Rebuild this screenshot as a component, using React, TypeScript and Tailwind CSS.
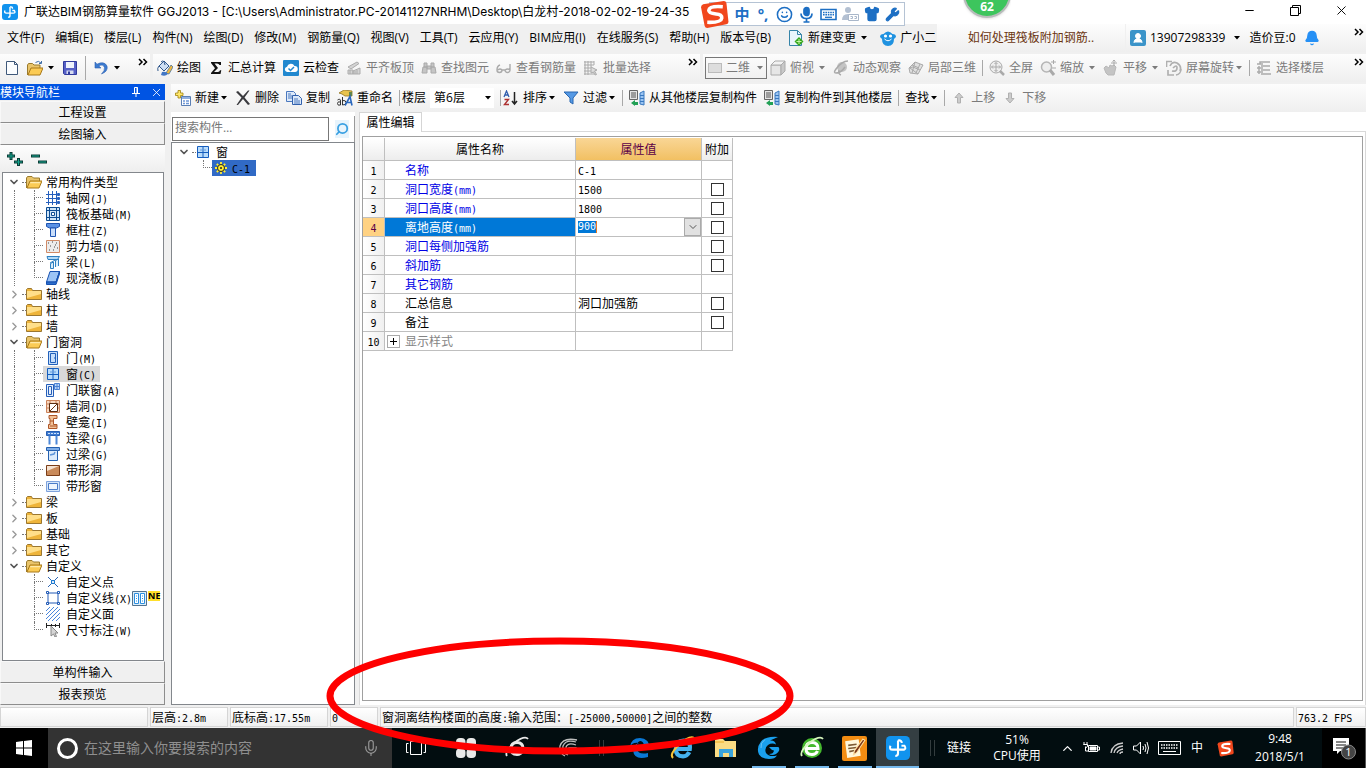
import React from "react";
import {
  ChevronDown, ChevronRight, ChevronUp, X, Minus, Search, Mic, Smile, Shirt, Wrench, Bell, UserRound,
} from "lucide-react";

const UI = "font-['Open_Sans','Noto_Sans_CJK_SC',sans-serif]";
const SONG = "font-['Noto_Sans_CJK_SC',sans-serif]";

/* Full-width characters stay at 12px; half-width ones take a 6px monospace cell. */
function Song({ text }: { text: string }) {
  return (
    <span className={`${SONG} whitespace-pre text-[12px] leading-4`}>
      {text.split(/([\x20-\x7e]+)/).filter(Boolean).map((part, i) =>
        /^[\x20-\x7e]/.test(part) ? (
          <span key={i} className="font-['DejaVu_Sans_Mono',monospace] text-[10px] leading-[10px]">{part}</span>
        ) : (
          <React.Fragment key={i}>{part}</React.Fragment>
        ),
      )}
    </span>
  );
}

const icons: Record<string, React.ReactNode> = {
  app: (
    <>
      <rect width="16" height="16" rx="3" fill="#1193ee" />
      <path d="M8 3v8.500q0 1.800-1.800 1.800M3 6.500q-1.200 2.600 1.500 2.600h8M10.300 6.500h2q1.800 2.600-1.200 2.600M8 3q2.500-.5 2.500 1.700" stroke="#fff" strokeWidth="1.400" fill="none" />
    </>
  ),
  doc: (
    <>
      <path d="M2.500 1.500h8l3 3v10h-11z" fill="#fbfdff" stroke="#3f587a" />
      <path d="M10.500 1.500v3h3" fill="none" stroke="#3f587a" />
    </>
  ),
  folderOpen: (
    <>
      <path d="M.500 14V4l1-1.500h4.500L7.500 4h6v3" fill="#e9c46a" stroke="#9a7a2c" />
      <path d="m1 14 3-7h12l-3 7z" fill="#fbcb55" stroke="#a87918" />
      <path d="m4.500 8h10l-.5 1.200H4z" fill="#ffe9a8" />
    </>
  ),
  openArrow: (
    <>
      <path d="M.500 15V5l1-1.500h4L7 5h6v3" fill="#e9c46a" stroke="#9a7a2c" />
      <path d="m1 15 3-7h12l-3 7z" fill="#fbcb55" stroke="#a87918" />
      <path d="M8.500 2.500q3-2.500 5.500.500m.500-2v2.500H12" stroke="#3f6ea8" fill="none" />
    </>
  ),
  save: (
    <>
      <path d="M1.500 1.500h13v13h-12l-1-1z" fill="#5660c6" stroke="#303a9c" />
      <path d="M4 2h8v6H4z" fill="#eef2fb" />
      <path d="M4.500 10.500h7V14h-7z" fill="#d6dcf0" />
      <path d="M6 11.500h2V14H6z" fill="#303a9c" />
    </>
  ),
  undo: <path d="M2 2v6h6L5.800 6Q10 3.500 11.500 7.500 12 10.500 8.500 14q7-3 5.500-8Q11 .500 4 4.200z" fill="#3c7bd0" stroke="#2b5fb0" strokeWidth=".6" />,
  draw: (
    <>
      <path d="M2 6 7 1l5 5-5 5z" fill="#cfe0f4" stroke="#31588c" />
      <path d="M4 2q3-3 4 3M2 6q-2 2-1 5" stroke="#31588c" fill="none" />
      <path d="m9 13 5-8 2 2-4 7z" fill="#efb840" stroke="#35669b" strokeWidth=".7" />
      <path d="M5 12q4-1 6 2-3 3-7 1z" fill="#4277c5" />
    </>
  ),
  sigma: <path d="M3 2h10v3h-1.500Q11 3.500 9 3.500H6.500L10 8l-4 4h4q1.500 0 2-1.800h1.300L12.500 14H3v-1l4-4.800L3 3z" fill="#111" />,
  cloud: (
    <>
      <rect width="16" height="16" rx="1" fill="#2188cf" />
      <path d="M4 12a2.700 2.700 0 0 1 0-5.300A4 4 0 0 1 11.500 6a3 3 0 0 1 .5 6z" fill="#fff" />
      <path d="m5.500 8.500 2 2L11 7" stroke="#2188cf" strokeWidth="1.500" fill="none" />
    </>
  ),
  slab: <path d="m2 7 9-5 2 1.500L5 9zM2 10h5v4H2zM7 11l7-3v6H7zM4 10v4M9 11v3M11 10v4" fill="#d4d4d4" stroke="#acacac" />,
  binoc: <path d="M2 7h4v6H1zM10 7h4l1 6h-5zM3 3h3v4H3zM10 3h3v4h-3zM6 6h4v3H6z" fill="#c5c5c5" stroke="#aaa" />,
  glasses: <path d="M4 5Q1 6 1 10a2.500 2.500 0 1 0 5 0q-2-2-4 0M6 10h3a2.500 2.500 0 1 0 5 0V4M14 10q-2-2-5 0" fill="none" stroke="#aaa" strokeWidth="1.400" />,
  batch: <path d="M1 2h10M1 5h10M1 8h7M1 11h7M1 14h10M2 1v14M5 1v14M8 1v6M11 1v4M8 7l6 3-2.500 1 2 3.500-1.500.500-1.500-3L8 13z" fill="#ddd" stroke="#aaa" />,
  cube: (
    <>
      <path d="M1 5h10v10H1z" fill="#e6e6e6" stroke="#aaa" />
      <path d="m1 5 4-4h10l-4 4z" fill="#f2f2f2" stroke="#aaa" />
      <path d="M15 1v10l-4 4V5z" fill="#c8c8c8" stroke="#aaa" />
    </>
  ),
  orbit: (
    <>
      <circle cx="9" cy="7" r="5" fill="#c4c4c4" />
      <path d="M15 1q-6 0-12 8-3 4 0 4 5 0 9-6M8 15q-3-1-2-5" fill="none" stroke="#aaa" strokeWidth="1.500" />
    </>
  ),
  local: <path d="m1 8 6-6 8 3-5 9-8-1zM4 5l7 3M2 8l8 6M7 2l-3 11M12 4l-4 9M1 8l4-1 7 3" fill="#e0e0e0" stroke="#aaa" />,
  fit: (
    <>
      <circle cx="7" cy="7" r="6" fill="#eee" stroke="#aaa" />
      <path d="M7 2.500v9M2.500 7h9M5.500 4 7 2.500 8.500 4M5.500 10 7 11.500 8.500 10M4 5.500 2.500 7 4 8.500M10 5.500 11.500 7 10 8.500" fill="none" stroke="#aaa" />
      <path d="m11 11 4 4" stroke="#aaa" strokeWidth="2.500" />
    </>
  ),
  zoom: (
    <>
      <circle cx="6.500" cy="7" r="5" fill="#eee" stroke="#b5b5b5" strokeWidth="1.500" />
      <path d="m10 10 4 5" stroke="#aaa" strokeWidth="3" />
      <path d="M11 2h5M13.500 0v4M12 8h4" stroke="#aaa" />
    </>
  ),
  hand: (
    <>
      <path d="m1 8 2-2 3 2 1-3 2 1 2-1 2 2-1 4-1 4H5l-2-2z" fill="#c4c4c4" stroke="#b8b8b8" />
      <path d="M11 0v6M8 3h6M9.500 1.500 11 0l1.500 1.500" fill="none" stroke="#aaa" />
    </>
  ),
  rotate: <path d="M.500 7V1.500H6M2 10v5h6M15 9a6 6 0 0 1-5 6M4 6q2-5 7-3 5 3 3 8M7 8q4-4 4 0t-5 3" fill="none" stroke="#b0b0b0" strokeWidth="1.700" />,
  floors: <path d="M1 4h6M4 4V2h10M5 6h9M1 8h6M5 10h9M1 12h6M5 14h10M3 6v8" fill="none" stroke="#aaa" strokeWidth="1.500" />,
  add: (
    <>
      <path d="M6.500 6.500h9v9h-9z" fill="#fff" stroke="#5b7fb4" />
      <path d="M7 8h8M8 11h2m1 0h3m-6 2.500h2m1 0h3" fill="none" stroke="#6e97d6" strokeWidth="1.500" />
      <path d="M3 .500h2.500V3H8v2.500H5.500V8H3V5.500H.500V3H3z" fill="#ffe76b" stroke="#a0810c" strokeWidth=".8" />
    </>
  ),
  del: <path d="M1 2 3 1l5 5 5-5.500h1.500L9.500 7.500 15 14l-2 1-5-6-5 6H1.500l5-7.500z" fill="#3a3a3e" />,
  copy: (
    <>
      <path d="M.500 1.500h7l2 2v8h-9z" fill="#dce9fa" stroke="#4a78be" />
      <path d="M2 4h3M2 6h4M2 8h4" stroke="#4a78be" />
      <path d="M6.500 5.500h6l3 3v6h-9z" fill="#dce9fa" stroke="#3160ac" />
      <path d="M8 9h4M8 11h6M8 13h6" stroke="#4a78be" />
    </>
  ),
  rename: (
    <>
      <path d="m2 3 5-3 8 1v5H8L5 4z" fill="#e8c34e" stroke="#927422" strokeWidth=".8" />
      <path d="M12 2h3v4h-3z" fill="#63864a" />
      <path d="M.500 10q3-2 3 1v4q-3 1-3-1.500t3-1.500M5.500 7v8q3.500 0 3.500-2.500T5.500 10.500" fill="none" stroke="#333" />
      <path d="m8 15.500 5-9 2 9m-5-3h4.500" fill="none" stroke="#2b67bd" strokeWidth="1.600" />
    </>
  ),
  sort: (
    <>
      <path d="m1 7 2.500-6L6 7M2 5h3" fill="none" stroke="#315eae" strokeWidth="1.300" />
      <path d="M1.500 9.500h4l-4 5h4.500" fill="none" stroke="#ad3131" strokeWidth="1.400" />
      <path d="M11.500 2v12M9 11l2.500 3 2.500-3" fill="none" stroke="#222" strokeWidth="1.500" />
    </>
  ),
  filter: <path d="M1 2h14l-5 6v6l-3-2V8z" fill="#5599e5" stroke="#2866b0" />,
  copyFrom: (
    <>
      <path d="M.500.500h8v9h-8z" fill="#e5e5e5" stroke="#666" />
      <path d="M2 3h5M2 5h5M2 7h5" stroke="#555" />
      <path d="m11 3 4-2v14l-4-1z" fill="#9bc5f3" stroke="#3978bf" />
      <path d="M11 5.500h4M11 8.500h4M11 11.500h4" stroke="#3978bf" />
      <path d="m2 13 4-3v2h3v3H6v1z" fill="#21a055" />
    </>
  ),
  up: <path d="m8 3 4 4.500h-2.500V13h-3V7.500H4z" fill="#ccc" stroke="#b0b0b0" />,
  down: <path d="M8 13 4 8.500h2.500V3h3v5.500H12z" fill="#ccc" stroke="#b0b0b0" />,
  change: (
    <>
      <path d="M1.500.500h8l4 4v11h-12z" fill="#eaf6fb" stroke="#3684a8" />
      <path d="M9.500.500v4h4" fill="none" stroke="#3684a8" />
      <path d="m11 7 4.500 4.500L11 16l-4.500-4.500z" fill="#37a81e" />
      <path d="M11 9v5M8.500 11.500h5" stroke="#c9f6a8" />
    </>
  ),
  mascot: (
    <>
      <path d="M3.500 4Q8-1 12.500 4q3.500 0 3.500 3l-2 2q0 7-6 7t-6-7L0 7q0-3 3.500-3z" fill="#1f92e0" />
      <circle cx="5.500" cy="6" r="1.600" fill="#fff" />
      <circle cx="10.500" cy="6" r="1.600" fill="#fff" />
      <path d="M4.500 9q3.500 3.500 7 0" stroke="#fff" fill="none" />
    </>
  ),
  folder: (
    <>
      <path d="M.500 13.500V3.500l1-1h4l1 2h9v9z" fill="#eeb43a" stroke="#9b7730" />
      <path d="M1 5h14v3L1 12z" fill="#ffdf8a" />
    </>
  ),
  gridAxis: <path d="M2.500 0v14M6.500 0v14M10.500 0v14M0 3.500h14M0 7.500h14M0 11.500h14M11.500 2.500h2v2h-2zM11.500 6.500h2v2h-2zM11.500 10.500h2v2h-2z" fill="#fff" stroke="#2660bd" />,
  raft: (
    <>
      <path d="M.500.500h13v13H.500z" fill="#cfe5f8" stroke="#0d4c92" />
      <path d="M3.500 1v12M10.500 1v12M1 3.500h12M1 10.500h12M5.500 5.500h3v3h-3z" fill="#fff" stroke="#0d4c92" />
    </>
  ),
  column: (
    <>
      <path d="M.500.500h13v3l-3 1.500h-7l-3-1.500z" fill="#5b92e4" stroke="#1e55b2" />
      <path d="M4.500 5h5v8.500h-5z" fill="#c9defa" stroke="#1e55b2" />
    </>
  ),
  wall: (
    <>
      <path d="M.500 1.500h13v12H.500z" fill="#ececec" stroke="#d08a66" />
      <path d="M2 4h1M6 3h1M10 4h1M4 7h1M8 8h1M11 9h1M3 11h1M7 11h1M9 6h1" stroke="#444" />
    </>
  ),
  beam: (
    <>
      <path d="M1 1.500h12.500l-2 3H2z" fill="#b2d9f7" stroke="#2e80c1" />
      <path d="M4 8l6-3.500M4.500 13.500v-5l3-1.500v6.500zM9.500 12V5.500l3-1.500v7" fill="#d9edfb" stroke="#2e80c1" />
    </>
  ),
  slabB: (
    <>
      <path d="M4 .500h9.500L10 11H.500z" fill="#9cc4f5" stroke="#1751b0" />
      <path d="M.500 11v2.500H10L13.500 3V.500L10 11z" fill="#2d6dcb" stroke="#1751b0" />
    </>
  ),
  door: <path d="M2.500.500h9v13h-9zM4.500 2.500h5v9h-5zM8 7h1.500" fill="#c6defa" stroke="#2261bb" />,
  win: (
    <>
      <path d="M1.500 1.500h11v11h-11z" fill="#b9dcfb" stroke="#155dbe" />
      <path d="M7 2v10M2 7.500h10M5 4.500v1M9 4.500v1" stroke="#155dbe" />
    </>
  ),
  doorWin: (
    <>
      <path d="M.500 1.500h7v12h-7zM2.500 3.500h3v8h-3z" fill="#e4effc" stroke="#255eb9" />
      <path d="M8.500.500h5v6h-5zM11 .500v6M8.500 3.500h5" fill="#b9d5f7" stroke="#4b82d3" />
    </>
  ),
  hole: (
    <>
      <path d="M.500 1.500h13v12H.500zM.500 5h13M4 1v12M.500 9h13M10 1v12" fill="#f7d8c0" stroke="#cb8158" />
      <path d="M3.500 4.500h8v8h-8z" fill="#fff" stroke="#5b2d10" />
      <path d="m4 12 7-7" stroke="#713611" />
    </>
  ),
  niche: <path d="M3 .500h8v3H7.500v6H11v4H2.500v-4H4v-6H3zM4 6h3M4 11h7" fill="#f3c196" stroke="#ad5628" />,
  link: (
    <>
      <path d="M.500.500h13v4H.500z" fill="#3f7bd0" stroke="#265fb4" />
      <path d="M2 2.500h2m1 0h2m1 0h2m1 0h2" stroke="#cfe2fa" />
      <path d="M3.500 4.500v9M10.500 4.500v9" stroke="#4d88d8" strokeWidth="2" />
    </>
  ),
  lintel: (
    <>
      <path d="M.500.500h13v3H.500z" fill="#7faee8" stroke="#2460af" />
      <path d="M2.500 3.500h9v10h-9z" fill="#dcebfb" stroke="#2460af" />
      <path d="m4 8 4-1 1-2" fill="none" stroke="#5c94da" strokeWidth="1.500" />
    </>
  ),
  stripHole: (
    <>
      <path d="M.500 2.500h13v10H.500z" fill="#c98a5a" stroke="#7b3d18" />
      <path d="M1 3h12L1 8z" fill="#f5e3d2" />
    </>
  ),
  stripWin: (
    <>
      <path d="M.500 2.500h13v10H.500z" fill="#d7e8fb" stroke="#7ea2dc" />
      <path d="M2.500 4.500h9v6h-9z" fill="#eef5fd" stroke="#4b7cc9" />
    </>
  ),
  point: (
    <>
      <path d="m2 2 10 10M12 2 2 12" stroke="#2e65b1" />
      <path d="M5.500 5.500h3v3h-3z" fill="#dcebfb" stroke="#1c7ad0" />
    </>
  ),
  line: <path d="M2 2h10v10H2zM.500.500h2v2h-2zM11.500.500h2v2h-2zM.500 11.500h2v2h-2zM11.500 11.500h2v2h-2z" fill="#fff" stroke="#225bb6" />,
  area: <path d="M0 4 4 0M0 8l8-8M0 12 12 0M2 14 14 2M6 14l8-8M10 14l4-4" stroke="#4a86dc" />,
  dim: (
    <>
      <path d="M0 2.500h14M.500 0v5M5.500 1v3M9.500 1v3M13.500 0v5" stroke="#222" />
      <path d="M5 3v10l2.500-2 1.500 3 1.500-.5-1.500-3.500h3z" fill="#d5d5d5" stroke="#888" />
    </>
  ),
  gear: (
    <>
      <path d="M7 1v12M1 7h12M2.800 2.800l8.400 8.400M11.200 2.800l-8.400 8.400" stroke="#ffee32" strokeWidth="1.800" />
      <circle cx="7" cy="7" r="3.500" fill="#ffee32" stroke="#222" />
      <circle cx="7" cy="7" r="1" fill="#222" />
    </>
  ),
};

function Icon({ name, small }: { name: string; small?: boolean }) {
  const box = small ? 14 : 16;
  return (
    <svg width={box} height={box} viewBox={`0 0 ${box} ${box}`} className="shrink-0" aria-hidden="true">
      {icons[name]}
    </svg>
  );
}

function Arrow() {
  return (
    <svg width="8" height="4" viewBox="0 0 8 4" className="shrink-0" aria-hidden="true">
      <path d="M1 0h6L4 3.500z" fill="currentColor" />
    </svg>
  );
}

function More() {
  return (
    <button aria-label="更多" className="flex self-start pt-1 text-black">
      <svg width="10" height="9" viewBox="0 0 10 9" fill="none" stroke="currentColor" strokeWidth="1.500">
        <path d="m1 1 3 3-3 3M5.500 1l3 3-3 3" />
      </svg>
    </button>
  );
}

const Sep = () => <span className="-mx-px h-4 w-px shrink-0 bg-[#a8a8a8]" />;

type ToolProps = { icon?: string; label: string; off?: boolean; arrow?: "near" | "far" };
function Tool({ icon, label, off, arrow }: ToolProps) {
  return (
    <button disabled={off} className={`flex shrink-0 items-center gap-1 whitespace-nowrap ${off ? "text-[#7b7b7b]" : "text-black"}`}>
      {icon && <Icon name={icon} />}
      <span className={arrow === "near" ? "flex items-center gap-px" : "flex items-center gap-1"}>
        {label}
        {arrow && <Arrow />}
      </span>
    </button>
  );
}

const BAR = "flex h-7 items-center bg-linear-to-b from-[#fdfdfd] to-[#efefef]";

function TitleBar() {
  return (
    <header className="flex h-6 items-center bg-white pl-0.5 pr-0.5">
      <Icon name="app" />
      <h1 className="ml-1.5 min-w-0 max-w-[690px] flex-1 overflow-hidden whitespace-nowrap font-['Inter','Noto_Sans_CJK_SC',sans-serif] text-[12px]">
        广联达BIM钢筋算量软件 GGJ2013 - [C:\Users\Administrator.PC-20141127NRHM\Desktop\白龙村-2018-02-02-19-24-35
      </h1>
      <div className="ml-auto flex self-stretch pb-1">
        <button aria-label="最小化" className="grid w-[46px] place-items-center"><Minus size={13} strokeWidth={2} /></button>
        <button aria-label="还原" className="grid w-[46px] place-items-center">
          <svg width="11" height="11" viewBox="0 0 11 11" fill="none" stroke="#000"><path d="M.500 2.500h8v8h-8zM2.500 2V.500h8v8H9" /></svg>
        </button>
        <button aria-label="关闭" className="grid w-[46px] place-items-center"><X size={15} strokeWidth={1.5} /></button>
      </div>
    </header>
  );
}

function SogouMark({ size }: { size: number }) {
  return (
    <svg width={size} height={size} viewBox="0 0 28 28" aria-hidden="true">
      <path d="M3 4 23 1q2 0 2.500 2l2 18q0 2-2 2.500L7 27q-2 0-2.500-2L1 7q0-2 2-3z" fill="#f1471d" />
      <path d="M22 6.500Q9 5.500 8.500 10q0 3 7 3.500 6 .500 5.500 4-.500 4.500-14 4" fill="none" stroke="#fff" strokeWidth="3.500" />
    </svg>
  );
}

function ImeBar() {
  return (
    <div className="absolute left-[700px] top-0 flex h-7 items-center text-[#1d6fc4]">
      <SogouMark size={29} />
      <div className="-z-10 -ml-5 flex h-6 items-center gap-[5px] border border-[#b5c3d4] bg-white pl-6 pr-1">
        <b className="w-4 text-center text-[15px] leading-4">中</b>
        <b className="w-4 text-center text-[15px] leading-4">°,</b>
        <Smile size={17} strokeWidth={2.2} />
        <svg width="17" height="17" viewBox="0 0 17 17" fill="none" stroke="currentColor" strokeWidth="1.700"><rect x="6" y="1.500" width="5" height="8" rx="2.500" fill="currentColor" /><path d="M3 7.500q0 5 5.500 5t5.500-5M8.500 12.500V16M5.500 16h6" /></svg>
        <svg width="17" height="17" viewBox="0 0 17 17" fill="none" stroke="currentColor"><path d="M1 3.500h15v10H1z" strokeWidth="1.600" /><path d="M3 6.500h11M3 8.800h11" strokeWidth="1.400" strokeDasharray="1.600 .8" /><path d="M5 11.300h7" strokeWidth="1.300" /></svg>
        <svg width="17" height="17" viewBox="0 0 17 17"><circle cx="6" cy="4" r="3" fill="#b3c0d2" /><path d="M0 14q0-6 6-6t6 6z" fill="#b3c0d2" /><path d="M6.500 8.500h10v6h-10z" fill="#fff" stroke="#a9b7ca" /><path d="M8.500 10.500h2v2h-2M12.500 10.500h2v2h-2" fill="none" stroke="#a9b7ca" /></svg>
        <Shirt size={16} className="fill-current" />
        <Wrench size={15} className="fill-current" />
      </div>
    </div>
  );
}

const menus = ["文件(F)", "编辑(E)", "楼层(L)", "构件(N)", "绘图(D)", "修改(M)", "钢筋量(Q)", "视图(V)", "工具(T)", "云应用(Y)", "BIM应用(I)", "在线服务(S)", "帮助(H)", "版本号(B)"];

function MenuBar() {
  return (
    <div className="flex h-[30px] items-stretch pb-0.5">
      <nav className="flex w-[937px] shrink-0 items-center gap-[11px] overflow-hidden pl-[7px]">
        {menus.map((m) => <button key={m} className="shrink-0 whitespace-nowrap">{m}</button>)}
        <span className="flex items-center gap-3 pl-1.5">
          <Tool icon="change" label="新建变更" arrow="far" />
          <Tool icon="mascot" label="广小二" />
        </span>
      </nav>
      <div className={`${BAR} w-[188px] shrink-0 justify-center text-[#6b3510]`}>
        <a href="#help">如何处理筏板附加钢筋..</a>
      </div>
      <div className={`${BAR} ml-px min-w-0 flex-1 gap-2 pl-1 pr-0.5`}>
        <button className="flex items-center gap-1 whitespace-nowrap">
          <span className="grid size-4 place-items-center rounded-xs bg-[#3b94c9] text-white"><UserRound size={12} className="fill-current" /></span>
          13907298339
          <span className="pl-1"><Arrow /></span>
        </button>
        <span>造价豆:0</span>
        <button aria-label="通知"><Bell size={16} className="fill-[#2690f5] text-[#2690f5]" /></button>
        <span className="ml-auto self-start"><More /></span>
      </div>
    </div>
  );
}

function MainToolbar() {
  return (
    <div className="flex h-[30px] items-start gap-[3px]">
      <div className={`${BAR} w-[150px] shrink-0 gap-[7px] pl-1`}>
        <button aria-label="新建文件"><Icon name="doc" /></button>
        <button aria-label="打开" className="flex items-center gap-1"><Icon name="openArrow" /><Arrow /></button>
        <button aria-label="保存"><Icon name="save" /></button>
        <span className="h-6 w-px bg-[#a8a8a8]" />
        <button aria-label="撤销" className="flex items-center gap-1"><Icon name="undo" /><Arrow /></button>
        <span className="ml-auto self-start pr-0.5"><More /></span>
      </div>
      <div className={`${BAR} w-[547px] shrink-0 gap-[7px] pl-1 pr-0.5`}>
        <Tool icon="draw" label="绘图" />
        <Tool icon="sigma" label="汇总计算" />
        <Tool icon="cloud" label="云检查" />
        <Tool icon="slab" label="平齐板顶" off />
        <Tool icon="binoc" label="查找图元" off />
        <Tool icon="glasses" label="查看钢筋量" off />
        <Tool icon="batch" label="批量选择" off />
        <span className="ml-auto self-start"><More /></span>
      </div>
      <div className={`${BAR} min-w-0 flex-1 gap-[7px] pl-0.5 pr-0.5`}>
        <label className="-mr-1 flex h-[22px] w-[62px] shrink-0 items-center gap-1 border border-[#777] px-0.5 text-[#7b7b7b]">
          <span className="h-2.5 w-3.5 border border-[#bbb] bg-[#ddd]" />
          <select aria-label="视图模式" className="min-w-0 flex-1 appearance-none"><option>二维</option></select>
          <Arrow />
        </label>
        <Tool icon="cube" label="俯视" off arrow="far" />
        <Tool icon="orbit" label="动态观察" off />
        <Tool icon="local" label="局部三维" off />
        <Sep />
        <Tool icon="fit" label="全屏" off />
        <Tool icon="zoom" label="缩放" off arrow="far" />
        <Tool icon="hand" label="平移" off arrow="far" />
        <Tool icon="rotate" label="屏幕旋转" off arrow="near" />
        <Sep />
        <Tool icon="floors" label="选择楼层" off />
        <span className="ml-auto self-start"><More /></span>
      </div>
    </div>
  );
}

function EditToolbar() {
  return (
    <div className={`${BAR} gap-[7px] pl-1`}>
      <Tool icon="add" label="新建" arrow="near" />
      <Tool icon="del" label="删除" />
      <Tool icon="copy" label="复制" />
      <Tool icon="rename" label="重命名" />
      <Sep />
      <label className="-ml-1 flex items-center gap-1 whitespace-nowrap">
        楼层
        <span className="flex h-5 w-16 items-center bg-white pl-1 pr-0.5">
          <select className="min-w-0 flex-1 appearance-none"><option>第6层</option></select>
          <Arrow />
        </span>
      </label>
      <Sep />
      <span className="-ml-1"><Tool icon="sort" label="排序" arrow="near" /></span>
      <Tool icon="filter" label="过滤" arrow="near" />
      <Sep />
      <Tool icon="copyFrom" label="从其他楼层复制构件" />
      <Tool icon="copyFrom" label="复制构件到其他楼层" />
      <Sep />
      <Tool label="查找" arrow="near" />
      <Sep />
      <Tool icon="up" label="上移" off />
      <Tool icon="down" label="下移" off />
    </div>
  );
}

type Group = { label: string; open?: boolean; items?: [string, string][] };
const groups: Group[] = [
  { label: "常用构件类型", open: true, items: [["gridAxis", "轴网(J)"], ["raft", "筏板基础(M)"], ["column", "框柱(Z)"], ["wall", "剪力墙(Q)"], ["beam", "梁(L)"], ["slabB", "现浇板(B)"]] },
  { label: "轴线" },
  { label: "柱" },
  { label: "墙" },
  { label: "门窗洞", open: true, items: [["door", "门(M)"], ["win", "窗(C)"], ["doorWin", "门联窗(A)"], ["hole", "墙洞(D)"], ["niche", "壁龛(I)"], ["link", "连梁(G)"], ["lintel", "过梁(G)"], ["stripHole", "带形洞"], ["stripWin", "带形窗"]] },
  { label: "梁" },
  { label: "板" },
  { label: "基础" },
  { label: "其它" },
  { label: "自定义", open: true, items: [["point", "自定义点"], ["line", "自定义线(X)"], ["area", "自定义面"], ["dim", "尺寸标注(W)"]] },
];

function Branch({ last }: { last: boolean }) {
  return (
    <span className="flex h-4 w-[9px] shrink-0 flex-col">
      <span className="h-2 border-b border-l border-dotted border-[#777]" />
      <span className={last ? "h-2" : "h-2 border-l border-dotted border-[#777]"} />
    </span>
  );
}

function ModuleTree() {
  return (
    <ul className="ml-0.5 mr-px flex-1 border border-[#83878c] bg-white pl-[3px] pt-px">
      {groups.map((g, gi) => (
        <li key={g.label}>
          <button className="flex h-4 items-center whitespace-nowrap">
            <span className="grid w-4 place-items-center text-[#555]">
              {g.open ? <ChevronDown size={12} strokeWidth={3.5} /> : <ChevronRight size={13} strokeWidth={2.5} className="text-[#999]" />}
            </span>
            <span className="w-1 border-t border-dotted border-[#777]" />
            <Icon name={g.open ? "folderOpen" : "folder"} />
            <span className="flex pl-1"><Song text={g.label} /></span>
          </button>
          {g.items && (
            <ul>
              {g.items.map(([icon, label], i) => (
                <li key={label} className="flex h-4 items-center">
                  <span className={gi === groups.length - 1 ? "ml-2 h-4 w-5 shrink-0" : "ml-2 h-4 w-5 shrink-0 border-l border-dotted border-[#777]"} />
                  <Branch last={i === g.items!.length - 1} />
                  <button className={`flex h-4 items-center gap-1.5 whitespace-nowrap pl-[3px] ${icon === "win" ? "bg-[#d9d9d9] pr-1" : ""}`}>
                    <Icon name={icon} small />
                    <Song text={label} />
                  </button>
                  {icon === "line" && (
                    <span className="flex items-start">
                      <svg width="15" height="15" viewBox="0 0 15 15" aria-hidden="true">
                        <path d="M.500.500h14v14H.500z" fill="#dceefa" stroke="#53738f" />
                        <path d="M2.500 2.500h4v10h-4zM8.500 2.500h4v10h-4z" fill="#fff" stroke="#2b8fe0" />
                        <path d="M4 5h1M4 7.500h1M4 10h1M10 5h1M10 7.500h1M10 10h1" stroke="#2b8fe0" />
                      </svg>
                      <b className="ml-px bg-[#ffdf2b] text-[9px] leading-[10px]">NE</b>
                    </span>
                  )}
                </li>
              ))}
            </ul>
          )}
        </li>
      ))}
    </ul>
  );
}

const NAVBTN = "h-[22px] shrink-0 border border-[#f8f8f8] border-b-[#8d8d8d] border-r-[#8d8d8d] bg-[#f0f0f0]";

function ModulePanel() {
  return (
    <aside className="flex w-[165px] shrink-0 flex-col">
      <div className="mb-px flex h-4 items-center bg-[#0054e3] text-white">
        <h2 className="flex flex-1"><Song text="模块导航栏" /></h2>
        <button aria-label="固定" className="mr-2.5">
          <svg width="8" height="10" viewBox="0 0 8 10" fill="none" stroke="currentColor"><path d="M2.500 6V.500h3V6M5 .500V6M0 6.500h8M4 7v3" /></svg>
        </button>
        <button aria-label="关闭面板" className="mr-0.5"><X size={13} strokeWidth={1.5} /></button>
      </div>
      <button className={NAVBTN}><Song text="工程设置" /></button>
      <button className={NAVBTN}><Song text="绘图输入" /></button>
      <div className="flex h-[27px] shrink-0 items-center gap-2 bg-linear-to-b from-[#fdfdfd] to-[#eee] pl-[7px]">
        <button aria-label="全部展开">
          <svg width="16" height="16" viewBox="0 0 16 16"><path d="M0 5h8M4 1v8M7 11h9M11.500 7v8" stroke="#0b3c36" strokeWidth="3" /><path d="M1 5h6M4 2v6M8 11h7M11.500 8v6" stroke="#15a58e" /></svg>
        </button>
        <button aria-label="全部折叠">
          <svg width="16" height="16" viewBox="0 0 16 16"><path d="M0 5h9M7 11h9" stroke="#0b3c36" strokeWidth="3" /><path d="M1 5h7M8 11h7" stroke="#15a58e" /></svg>
        </button>
      </div>
      <ModuleTree />
      <button className={NAVBTN}><Song text="单构件输入" /></button>
      <button className={NAVBTN}><Song text="报表预览" /></button>
    </aside>
  );
}

function ComponentPanel() {
  return (
    <section className="flex w-[184px] shrink-0 flex-col bg-white pt-1">
      <form className="flex h-[26px] items-center border-r border-[#999] pl-px" onSubmit={(e) => e.preventDefault()}>
        <input aria-label="搜索构件" placeholder="搜索构件…" className="h-6 w-[157px] border border-[#777] bg-white px-0.5 pb-1 text-[12px] leading-4 placeholder:text-[#777]" />
        <button aria-label="搜索" className="ml-1.5 grid h-[18px] w-3.5 place-items-center bg-[#e8f4fc] text-[#39a0e2]"><Search size={14} strokeWidth={3} className="-scale-x-100" /></button>
      </form>
      <div className="flex-1 border border-[#83878c] pl-1 pt-px">
        <button className="flex h-4 items-center">
          <span className="grid w-4 place-items-center text-[#555]"><ChevronDown size={12} strokeWidth={3.5} /></span>
          <span className="w-1 border-t border-dotted border-[#777]" />
          <Icon name="win" small />
          <span className="flex pl-1.5"><Song text="窗" /></span>
        </button>
        <div className="flex h-4 items-center pl-[27px]">
          <Branch last />
          <button className="flex h-4 items-center gap-1 bg-[#316ac5] pl-0.5 pr-1.5">
            <Icon name="gear" small />
            <Song text="C-1" />
          </button>
        </div>
      </div>
    </section>
  );
}

type Row = { name: string; value: string; check?: boolean; tone: string };
const rows: Row[] = [
  { name: "名称", value: "C-1", tone: "text-[#0000e6]" },
  { name: "洞口宽度(mm)", value: "1500", check: true, tone: "text-[#0000e6]" },
  { name: "洞口高度(mm)", value: "1800", check: true, tone: "text-[#0000e6]" },
  { name: "离地高度(mm)", value: "900", check: true, tone: "text-white" },
  { name: "洞口每侧加强筋", value: "", check: true, tone: "text-[#0000e6]" },
  { name: "斜加筋", value: "", check: true, tone: "text-[#0000e6]" },
  { name: "其它钢筋", value: "", tone: "text-[#0000e6]" },
  { name: "汇总信息", value: "洞口加强筋", check: true, tone: "text-black" },
  { name: "备注", value: "", check: true, tone: "text-black" },
  { name: "显示样式", value: "", tone: "text-[#848484]" },
];

const CELL = "h-[19px] border-b border-r border-[#bfbfbf] p-0";
const HEAD = "h-[23px] border-b border-r border-[#bfbfbf] p-0 font-normal";

function PropertyTable() {
  return (
    <table className="w-[370px] table-fixed border-separate border-spacing-0">
      <colgroup><col className="w-[22px]" /><col className="w-[191px]" /><col className="w-[126px]" /><col className="w-[31px]" /></colgroup>
      <thead>
        <tr className="bg-linear-to-b from-white to-[#ececec]">
          <th className={HEAD} />
          <th className={HEAD}><Song text="属性名称" /></th>
          <th className={`${HEAD} bg-linear-to-b from-[#f9d695] to-[#f2c062] text-[#5b0047]`}><Song text="属性值" /></th>
          <th className={HEAD}><Song text="附加" /></th>
        </tr>
      </thead>
      <tbody>
        {rows.map((r, i) => {
          const active = i === 3;
          return (
            <tr key={r.name} className="leading-4">
              <th scope="row" className={`${CELL} text-center font-normal ${active ? "bg-[#ffd283] text-[#5b0047]" : "bg-linear-to-r from-white to-[#f0f0f0]"}`}>
                <Song text={String(i + 1)} />
              </th>
              <td className={`${CELL} ${r.tone} ${active ? "bg-[#0078d7]" : ""}`}>
                <span className="flex items-center">
                  <span className="flex w-5 pl-0.5">
                    {i === 9 && (
                      <button aria-label="展开" className="grid size-[13px] place-items-center border border-[#aaa] bg-white text-black">
                        <svg width="7" height="7" viewBox="0 0 7 7"><path d="M0 3.500h7M3.500 0v7" stroke="currentColor" /></svg>
                      </button>
                    )}
                  </span>
                  <Song text={r.name} />
                </span>
              </td>
              <td className={CELL}>
                {active ? (
                  <span className="flex h-[18px] items-center justify-between pl-0.5">
                    <input aria-label={r.name} defaultValue={r.value} className="h-3 w-[19px] border-r border-[#e77c20] bg-[#0078d7] font-['DejaVu_Sans_Mono',monospace] text-[10px] leading-3 text-white" />
                    <button aria-label="选择数值" className="grid h-[18px] w-[17px] place-items-center border border-[#aaa] bg-[#e1e1e1] text-[#555]"><ChevronDown size={12} /></button>
                  </span>
                ) : (
                  <span className="flex pl-0.5"><Song text={r.value} /></span>
                )}
              </td>
              <td className={CELL}>
                {r.check && <input type="checkbox" aria-label={`附加 ${r.name}`} className="mx-auto block size-[13px] appearance-none border border-[#333] bg-white" />}
              </td>
            </tr>
          );
        })}
      </tbody>
    </table>
  );
}

function PropertyPanel() {
  return (
    <section className="ml-1 flex min-w-0 flex-1 flex-col bg-white">
      <div className="flex h-5">
        <button className="w-[63px] shrink-0 border-l border-r border-t border-[#d5d5d5] bg-white"><Song text="属性编辑" /></button>
        <span className="flex-1 border-b border-[#d9d9d9]" />
      </div>
      <div className="flex flex-1 border-l border-r border-[#d9d9d9] px-0.5 pb-1 pt-1">
        <div className="flex-1 border border-[#a0a0a0] pt-px"><PropertyTable /></div>
      </div>
    </section>
  );
}

function StatusBar() {
  const cell = "flex h-5 items-center overflow-hidden border border-[#d5d5d5] bg-linear-to-b from-white to-[#f0f0f0] px-px";
  return (
    <footer className="flex h-[21px] shrink-0 items-start gap-0.5">
      <div className={`${cell} w-[148px] shrink-0`} />
      <div className={`${cell} w-[78px] shrink-0`}><Song text="层高:2.8m" /></div>
      <div className={`${cell} w-[98px] shrink-0`}><Song text="底标高:17.55m" /></div>
      <div className={`${cell} w-12 shrink-0`}><Song text="0" /></div>
      <div className={`${cell} min-w-0 flex-1`}><Song text="窗洞离结构楼面的高度:输入范围：[-25000,50000]之间的整数" /></div>
      <div className={`${cell} w-[70px] shrink-0`}><Song text="763.2 FPS" /></div>
    </footer>
  );
}

function Swirl({ color }: { color: string }) {
  return (
    <svg width="24" height="24" viewBox="0 0 24 24" aria-hidden="true">
      <path d="M21 1Q9 0 4 5.500-1 12 2 18.500 5 23 12 23q6 0 8-3.500-8 2-11-2.500-2-5 2-8 4-2.500 8-.500Q18 4 13 4.500q4-2 8-3.500z" fill={color} />
      <path d="M12 11h9.500q2.500 3.500-2.500 7-4 2-7 0 4.500 0 5-3.500-2 0-5-3.500z" fill={color} />
      <path d="M8 3.500Q3 7 4 12" fill="none" stroke="#fff" strokeOpacity=".35" />
    </svg>
  );
}

function RingE({ ring, letter, orbit }: { ring: string; letter: string; orbit: string }) {
  return (
    <svg width="24" height="24" viewBox="0 0 24 24" aria-hidden="true">
      <circle cx="12" cy="12" r="10" fill={ring} />
      <path d="M6 12.500h12Q18 6.500 12 6.500T6 12.500q0 6 6 6 4 0 5.500-3.500" fill="none" stroke={letter} strokeWidth="3" />
      <path d="M2 20Q-1 16 9 7 20-1 23 3" fill="none" stroke={orbit} strokeWidth="1.800" />
    </svg>
  );
}

const taskApps: { label: string; running?: boolean; active?: boolean; art: React.ReactNode }[] = [
  { label: "Edge", art: <svg width="22" height="24" viewBox="0 0 22 24"><path d="M1 11Q2 2 11 2q9 0 10 11H8q1 6 11 4v4Q5 25 4 14q0-5 6-7-7-1-9 4zm7-2h7q-1-4-4-4-3 1-3 4z" fill="#0a78d6" /></svg> },
  { label: "Internet Explorer", art: <svg width="25" height="25" viewBox="0 0 24 24"><path d="M5 12.500h14q1-8-6-8t-7.500 8q0 7 7 7 4 0 6-4" fill="none" stroke="#45b3ef" strokeWidth="4" /><path d="M3 21q-4-3 5-12Q19-1 23 2q1 2-1 4" fill="none" stroke="#f5c53a" strokeWidth="2" /></svg> },
  { label: "文件资源管理器", art: <svg width="22" height="22" viewBox="0 0 22 22"><path d="M0 2h8l2 2h11v16H0z" fill="#fbdc84" /><path d="M0 4h9v2H0z" fill="#f5c453" /><path d="M4 12h14v8h-4v-4H8v4H4z" fill="#3aa4dd" /></svg> },
  { label: "广联达", running: true, art: <Swirl color="#1aa0ee" /> },
  { label: "360浏览器", running: true, art: <RingE ring="#45b82e" letter="#fff" orbit="#d7f5bd" /> },
  { label: "笔记", running: true, art: <svg width="25" height="25" viewBox="0 0 24 24"><rect width="24" height="24" rx="2" fill="#f28c12" /><path d="m3 5 13-2 2 16-13 2z" fill="#fff8dc" /><path d="m6 9 8-1M6 12l8-1M7 15l5-1" stroke="#7d5b35" strokeWidth="1.500" /><path d="m11 18 1-4L20 3l2 1-8 12z" fill="#7b3518" stroke="#ffe0a0" /></svg> },
  { label: "钢筋算量", running: true, active: true, art: <svg width="24" height="24" viewBox="0 0 16 16">{icons.app}</svg> },
];

function Taskbar() {
  return (
    <footer className="flex h-10 shrink-0 items-stretch bg-[#020d10] text-white">
      <button aria-label="开始" className="grid w-12 shrink-0 place-items-center bg-black">
        <svg width="16" height="16" viewBox="0 0 16 16"><path d="m0 2 7-1v6.500H0zM8 1l8-1v7.500H8zM0 8.500h7V15l-7-1zM8 8.500h8V16l-8-1z" fill="#fff" /></svg>
      </button>
      <label className="flex w-[344px] shrink-0 items-center bg-[#333] pl-[9px] pr-3">
        <span className="size-[21px] shrink-0 rounded-full border-3 border-white" />
        <input placeholder="在这里输入你要搜索的内容" className="ml-1.5 min-w-0 flex-1 bg-transparent text-[14px] leading-5 placeholder:text-[#8f8f8f]" />
        <Mic size={18} strokeWidth={1.5} className="text-[#9a9a9a]" />
      </label>
      <button aria-label="任务视图" className="grid w-12 shrink-0 place-items-center">
        <svg width="20" height="16" viewBox="0 0 20 16" fill="none" stroke="#fff"><path d="M4.500 1.500h11v13h-11zM2.500 3.500h-2v9h2M17.500 3.500h2v9h-2" /></svg>
      </button>
      <button aria-label="应用中心" className="grid w-[51px] shrink-0 place-items-center">
        <svg width="22" height="22" viewBox="0 0 22 22" fill="#e8e8e8"><rect x="1" y="1" width="9.500" height="9.500" rx="4" /><rect x="11.500" y="1" width="9.500" height="9.500" rx="4" /><rect x="1" y="11.500" width="9.500" height="9.500" rx="4" /><rect x="11.500" y="11.500" width="9.500" height="9.500" rx="4" /></svg>
      </button>
      <button aria-label="浏览器" className="grid w-[51px] shrink-0 place-items-center"><RingE ring="#020d10" letter="#e8e8e8" orbit="#e8e8e8" /></button>
      <button aria-label="广联达工具" className="grid w-[51px] shrink-0 place-items-center">
        <svg width="20" height="20" viewBox="0 0 20 20" fill="none" stroke="#bdbdbd" strokeWidth="1.300"><path d="M19 2Q5-1 2 8q-1 7 5 10M18 4Q8 1 5 8q-1 7 5 9M18 7Q10 4 8 9q0 7 6 6 4-1 4-5h-6l3 2" /></svg>
      </button>
      <span className="mx-1.5 my-3 w-[5px] shrink-0 border-l border-r border-[#333c3e]" />
      <div className="ml-2 flex shrink-0">
        {taskApps.map((a) => (
          <button key={a.label} aria-label={a.label} className={`flex w-[43px] flex-col items-center ${a.active ? "bg-[#343e42]" : ""}`}>
            <span className="grid flex-1 place-items-center pt-0.5">{a.art}</span>
            <span className={`h-0.5 ${a.active ? "w-full bg-[#76b9ed]" : a.running ? "w-[34px] bg-[#76b9ed]" : "w-full"}`} />
          </button>
        ))}
      </div>
      <div className="ml-auto flex shrink-0 items-center text-[12px]">
        <span className="h-4 w-[5px] border-l border-r border-[#333c3e]" />
        <span className="ml-3">链接</span>
        <span className="ml-[18px] w-14 text-center leading-4">51%<br />CPU使用</span>
        <button aria-label="显示隐藏的图标" className="ml-[15px]"><ChevronUp size={15} strokeWidth={2} /></button>
        <svg className="ml-2" width="17" height="14" viewBox="0 0 17 14" fill="none" stroke="#fff"><path d="M5.500 4.500h9v6h-9zM15 6h1.500v3H15M1 1v3M4 1v3M.500 3.500h4v2q-2 2-2 0M2.500 6v4h3" /><path d="M7 6h6v3H7z" fill="#fff" /></svg>
        <svg className="ml-2.5" width="15" height="14" viewBox="0 0 15 14" fill="none" stroke="#ccc"><path d="M1 12Q2 3 13 2M4 12q1-6 9-7M7 12q1-3 6-4M10 13q0-2 3-2" strokeWidth="1.300" /></svg>
        <svg className="ml-2" width="17" height="14" viewBox="0 0 17 14" fill="none" stroke="#fff"><path d="M.500 5h3l4-4v12l-4-4h-3zM10 5q1 2 0 4M12 3q2 4 0 8M14 1q3 6 0 12" /></svg>
        <svg className="ml-2" width="23" height="14" viewBox="0 0 23 14" fill="none" stroke="#fff"><path d="M.500.500h22v13H.500z" /><path d="M3 4h17M3 7h17" strokeDasharray="1.500 1" strokeWidth="1.500" /><path d="M5 10.500h13" /></svg>
        <span className="ml-2.5">中</span>
        <span className="ml-3.5"><SogouMark size={17} /></span>
        <time className="ml-[18px] w-14 text-center leading-[18px]">9:48<br />2018/5/1</time>
        <button aria-label="通知中心" className="ml-3.5 flex h-10 w-11 items-center justify-center border-r border-[#555] bg-black">
          <svg width="24" height="24" viewBox="0 0 24 24">
            <path d="M1 2h16v13H8l-3 3v-3H1z" fill="#fff" />
            <path d="M4 6h10M4 9h10M4 12h7" stroke="#111" />
            <circle cx="16.500" cy="16" r="7" fill="#444" stroke="#888" />
            <text x="16.500" y="20" fill="#fff" fontSize="11" textAnchor="middle">1</text>
          </svg>
        </button>
      </div>
    </footer>
  );
}

export default function App() {
  return (
    <div className={`${UI} relative isolate flex min-h-screen flex-col overflow-hidden bg-[#f0f0f0] text-[12px] leading-4 text-black`}>
      <TitleBar />
      <MenuBar />
      <MainToolbar />
      <main className="flex flex-1 pb-0.5">
        <ModulePanel />
        <div className="ml-1.5 flex min-w-0 flex-1 flex-col">
          <EditToolbar />
          <div className="flex flex-1">
            <ComponentPanel />
            <PropertyPanel />
          </div>
        </div>
      </main>
      <StatusBar />
      <Taskbar />
      <div className="absolute left-0 top-0 isolate"><ImeBar /></div>
      <div className="absolute left-[963px] top-0 h-5 w-12 overflow-hidden">
        <div className="absolute bottom-0.5 flex size-12 items-end justify-center rounded-full border-2 border-[#b8bcbb] bg-[#3dc55d] pb-[3px] text-[12px] font-bold leading-3 text-white shadow">62</div>
      </div>
      <svg className="pointer-events-none absolute bottom-[13px] left-[326px]" width="468" height="118" viewBox="0 0 468 118" aria-hidden="true">
        <ellipse cx="234" cy="59" rx="230" ry="55" fill="none" stroke="#fe0000" strokeWidth="7" />
      </svg>
    </div>
  );
}
